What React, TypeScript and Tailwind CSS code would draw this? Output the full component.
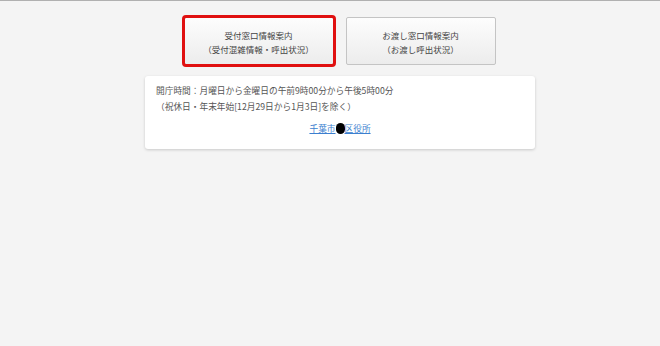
import React from "react";

export default function App() {
  const font = { fontFamily: '"Noto Sans CJK JP", "Noto Sans", sans-serif' };
  return (
    <div className="w-[660px] h-[346px] bg-[#f4f4f4] border-t border-[#b0b0b0] flex flex-col items-center pl-[20px]" style={font}>
      <div className="flex gap-[12px] mt-[16px] ml-[-1px]">
        <button className="w-[150px] h-[48px] pt-[2px] bg-gradient-to-b from-[#fdfdfd] to-[#ececec] border border-[#c4c4c4] rounded-[2px] outline outline-[3px] outline-[#e01010] outline-offset-[-1px] text-[8.5px] leading-[14px] text-[#444] flex flex-col items-center justify-center">
          <span>受付窓口情報案内</span>
          <span>（受付混雑情報・呼出状況）</span>
        </button>
        <button className="w-[150px] h-[48px] pt-[2px] bg-gradient-to-b from-[#fdfdfd] to-[#ececec] border border-[#c4c4c4] rounded-[2px] text-[8.5px] leading-[14px] text-[#444] flex flex-col items-center justify-center">
          <span>お渡し窓口情報案内</span>
          <span>（お渡し呼出状況）</span>
        </button>
      </div>
      <div className="w-[390px] mt-[11px] bg-white rounded-[3px] shadow-[0_1px_3px_rgba(0,0,0,0.18)] pt-[7px] pb-[14px] px-[11px] text-[8.7px] text-[#555]">
        <div className="leading-[16px]">開庁時間：月曜日から金曜日の午前9時00分から午後5時00分</div>
        <div className="leading-[16px]">（祝休日・年末年始[12月29日から1月3日]を除く）</div>
        <div className="text-center mt-[8px] leading-[12px]">
          <a href="#" className="text-[#3c7fcf] underline">
            千葉市<span className="inline-block w-[9px] h-[11px] bg-black rounded-full align-[-2px]"></span>区役所
          </a>
        </div>
      </div>
    </div>
  );
}
